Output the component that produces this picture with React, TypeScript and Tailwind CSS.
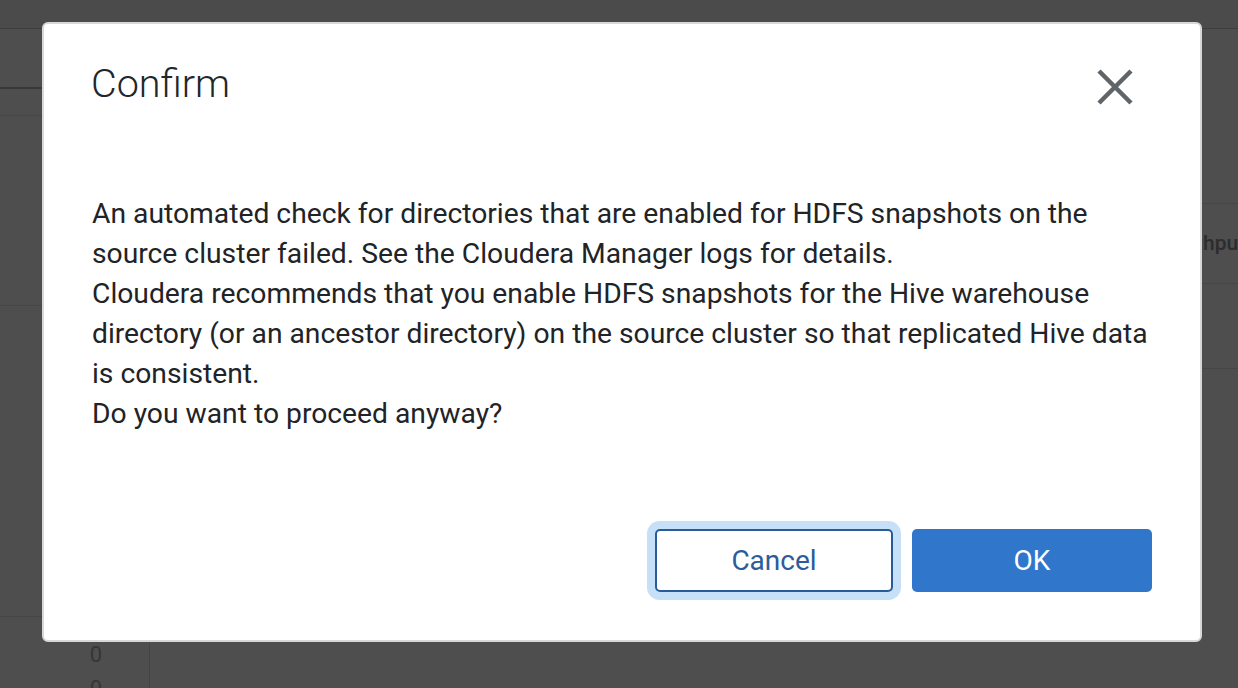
function Backdrop() {
  return (
    <div className="flex h-full w-full flex-col bg-[#4e4e4e] text-[#363636]">
      <div className="h-[29px] shrink-0 border-b border-[#3d3d3d] bg-[#4b4b4b]" />
      <div className="flex flex-1">
        <div className="flex w-[620px] shrink-0 flex-col">
          <div className="h-[60px] border-b-2 border-[#383838]" />
          <div className="h-[27px] border-b border-[#464646]" />
          <div className="h-[190px] border-b border-[#464646]" />
          <div className="h-[311px] border-b border-[#464646]" />
          <div className="flex flex-1">
            <div className="flex w-[150px] flex-col border-r border-[#454545] pr-[47px] text-right text-[22px] leading-[34px]">
              <div className="pt-[21px]">0</div>
              <div>0</div>
            </div>
          </div>
        </div>
        <div className="flex min-w-0 flex-1 flex-col overflow-hidden">
          <div className="h-[175px] border-b border-[#464646]" />
          <div className="flex h-[80px] items-center whitespace-nowrap border-b border-[#464646] pl-[516px] text-[21px] font-medium text-[#2c2c2c]">
            Throughput
          </div>
          <div className="h-[85px] border-b border-[#464646]" />
          <div className="flex-1" />
        </div>
      </div>
    </div>
  );
}

export default function App() {
  return (
    <div
      className="relative h-[688px] w-[1238px] overflow-hidden"
      style={{ fontFamily: "Roboto, 'Noto Sans', sans-serif" }}
    >
      <Backdrop />
      <div className="absolute left-[42px] top-[22px] flex h-[620px] w-[1160px] flex-col rounded-[6px] border-2 border-[#d8d8d8] bg-white px-[48px] pb-[48px] pt-[36px]">
        <div className="flex items-start justify-between">
          <h2 className="-ml-[1px] text-[39.5px] font-light leading-[48px] text-[#23262a]">Confirm</h2>
          <button className="mr-[19px] mt-[9px] text-[#5f6469]" aria-label="Close">
            <svg width="36" height="36" viewBox="0 0 36 36" fill="none" stroke="currentColor" strokeWidth="4.5">
              <path d="M2 2 L34 34 M34 2 L2 34" />
            </svg>
          </button>
        </div>
        <div className="mt-[86px] whitespace-nowrap text-[28.25px] leading-[40px] text-[#212326]">
          <p>
            An automated check for directories that are enabled for HDFS snapshots on the
            <br />
            source cluster failed. See the Cloudera Manager logs for details.
          </p>
          <p>
            Cloudera recommends that you enable HDFS snapshots for the Hive warehouse
            <br />
            directory (or an ancestor directory) on the source cluster so that replicated Hive data
            <br />
            is consistent.
          </p>
          <p>Do you want to proceed anyway?</p>
        </div>
        <div className="mt-auto flex justify-end gap-[19px]">
          <button className="h-[63px] w-[238px] rounded-[5px] border-2 border-[#2a5b99] bg-white text-[28px] text-[#2c5c9b] shadow-[0_0_0_8px_#c5e0f7]">
            Cancel
          </button>
          <button className="h-[63px] w-[240px] rounded-[5px] bg-[#3076cb] text-[28px] text-white">
            OK
          </button>
        </div>
      </div>
    </div>
  );
}
